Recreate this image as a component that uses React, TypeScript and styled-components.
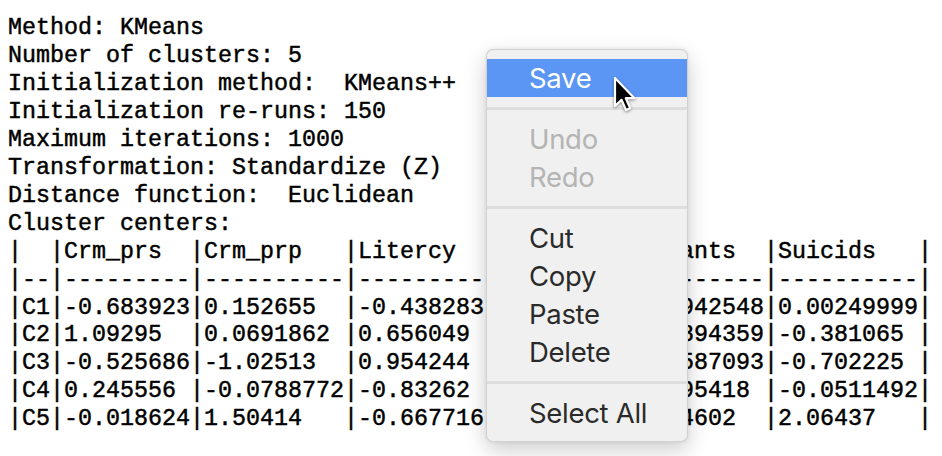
import React from "react";
import styled, { createGlobalStyle } from "styled-components";

const GlobalStyle = createGlobalStyle`
  html, body { margin: 0; padding: 0; background: #ffffff; }
  #root { width: 942px; height: 456px; }
`;

const Page = styled.div`
  position: relative;
  width: 942px;
  height: 456px;
  overflow: hidden;
  background: #ffffff;
`;

const Output = styled.pre`
  margin: 0;
  padding: 15px 0 0 8px;
  font-family: "Liberation Mono", "Courier New", monospace;
  font-size: 23.33px;
  line-height: 27.95px;
  color: #000000;
  -webkit-text-stroke: 0.45px #000000;
  white-space: pre;
`;

const Menu = styled.div`
  position: absolute;
  left: 486px;
  top: 49px;
  width: 202px;
  box-sizing: border-box;
  padding: 9px 0;
  background: #f0f0f0;
  border: 1px solid rgba(0, 0, 0, 0.13);
  border-radius: 7px;
  box-shadow: 0 8px 22px rgba(0, 0, 0, 0.2), 0 0 4px rgba(0, 0, 0, 0.07);
  display: flex;
  flex-direction: column;
  font-family: "Inter", "Liberation Sans", sans-serif;
`;

const Item = styled.div<{ $active?: boolean; $disabled?: boolean }>`
  height: 38px;
  display: flex;
  align-items: center;
  padding-left: 42px;
  font-size: 27.5px;
  letter-spacing: -0.3px;
  background: ${(p) => (p.$active ? "#5b96f5" : "transparent")};
  color: ${(p) => (p.$active ? "#ffffff" : p.$disabled ? "#b4b4b4" : "#2a2a2a")};
`;

const Separator = styled.div`
  height: 23px;
  display: flex;
  align-items: center;
  &::after {
    content: "";
    display: block;
    width: 100%;
    height: 3px;
    background: #dedede;
  }
`;

const Cursor = styled.svg`
  position: absolute;
  left: 612px;
  top: 75px;
  width: 26px;
  height: 40px;
  filter: drop-shadow(0 1px 1.5px rgba(0, 0, 0, 0.45));
`;

const info = [
  "Method: KMeans",
  "Number of clusters: 5",
  "Initialization method:  KMeans++",
  "Initialization re-runs: 150",
  "Maximum iterations: 1000",
  "Transformation: Standardize (Z)",
  "Distance function:  Euclidean",
  "Cluster centers:",
];

const widths = [2, 9, 10, 9, 9, 9, 10];
const header = ["", "Crm_prs", "Crm_prp", "Litercy", "Donatns", "Infants", "Suicids"];
const rows = [
  ["C1", "-0.683923", "0.152655", "-0.438283", "-0.150187", "-0.942548", "0.00249999"],
  ["C2", "1.09295", "0.0691862", "0.656049", "0.127441", "-0.894359", "-0.381065"],
  ["C3", "-0.525686", "-1.02513", "0.954244", "0.682385", "-0.587093", "-0.702225"],
  ["C4", "0.245556", "-0.0788772", "-0.83262", "-0.581294", "-0.95418", "-0.0511492"],
  ["C5", "-0.018624", "1.50414", "-0.667716", "0.294516", "0.84602", "2.06437"],
];

const line = (cells: string[]) =>
  "|" + cells.map((c, i) => c.padEnd(widths[i], " ")).join("|") + "|";

const tableLines = [
  line(header),
  line(widths.map((w) => "-".repeat(w))),
  ...rows.map(line),
];

export default function App() {
  return (
    <Page>
      <GlobalStyle />
      <Output>{[...info, ...tableLines].join("\n")}</Output>
      <Menu>
        <Item $active>Save</Item>
        <Separator />
        <Item $disabled>Undo</Item>
        <Item $disabled>Redo</Item>
        <Separator />
        <Item>Cut</Item>
        <Item>Copy</Item>
        <Item>Paste</Item>
        <Item>Delete</Item>
        <Separator />
        <Item>Select All</Item>
      </Menu>
      <Cursor viewBox="0 0 26 40">
        <path
          d="M3 3 L3 31 L9.5 24.8 L14 35 L18.2 33.2 L13.8 23.2 L22.5 23.2 Z"
          fill="#000"
          stroke="#fff"
          strokeWidth="2.2"
          strokeLinejoin="round"
        />
      </Cursor>
    </Page>
  );
}
